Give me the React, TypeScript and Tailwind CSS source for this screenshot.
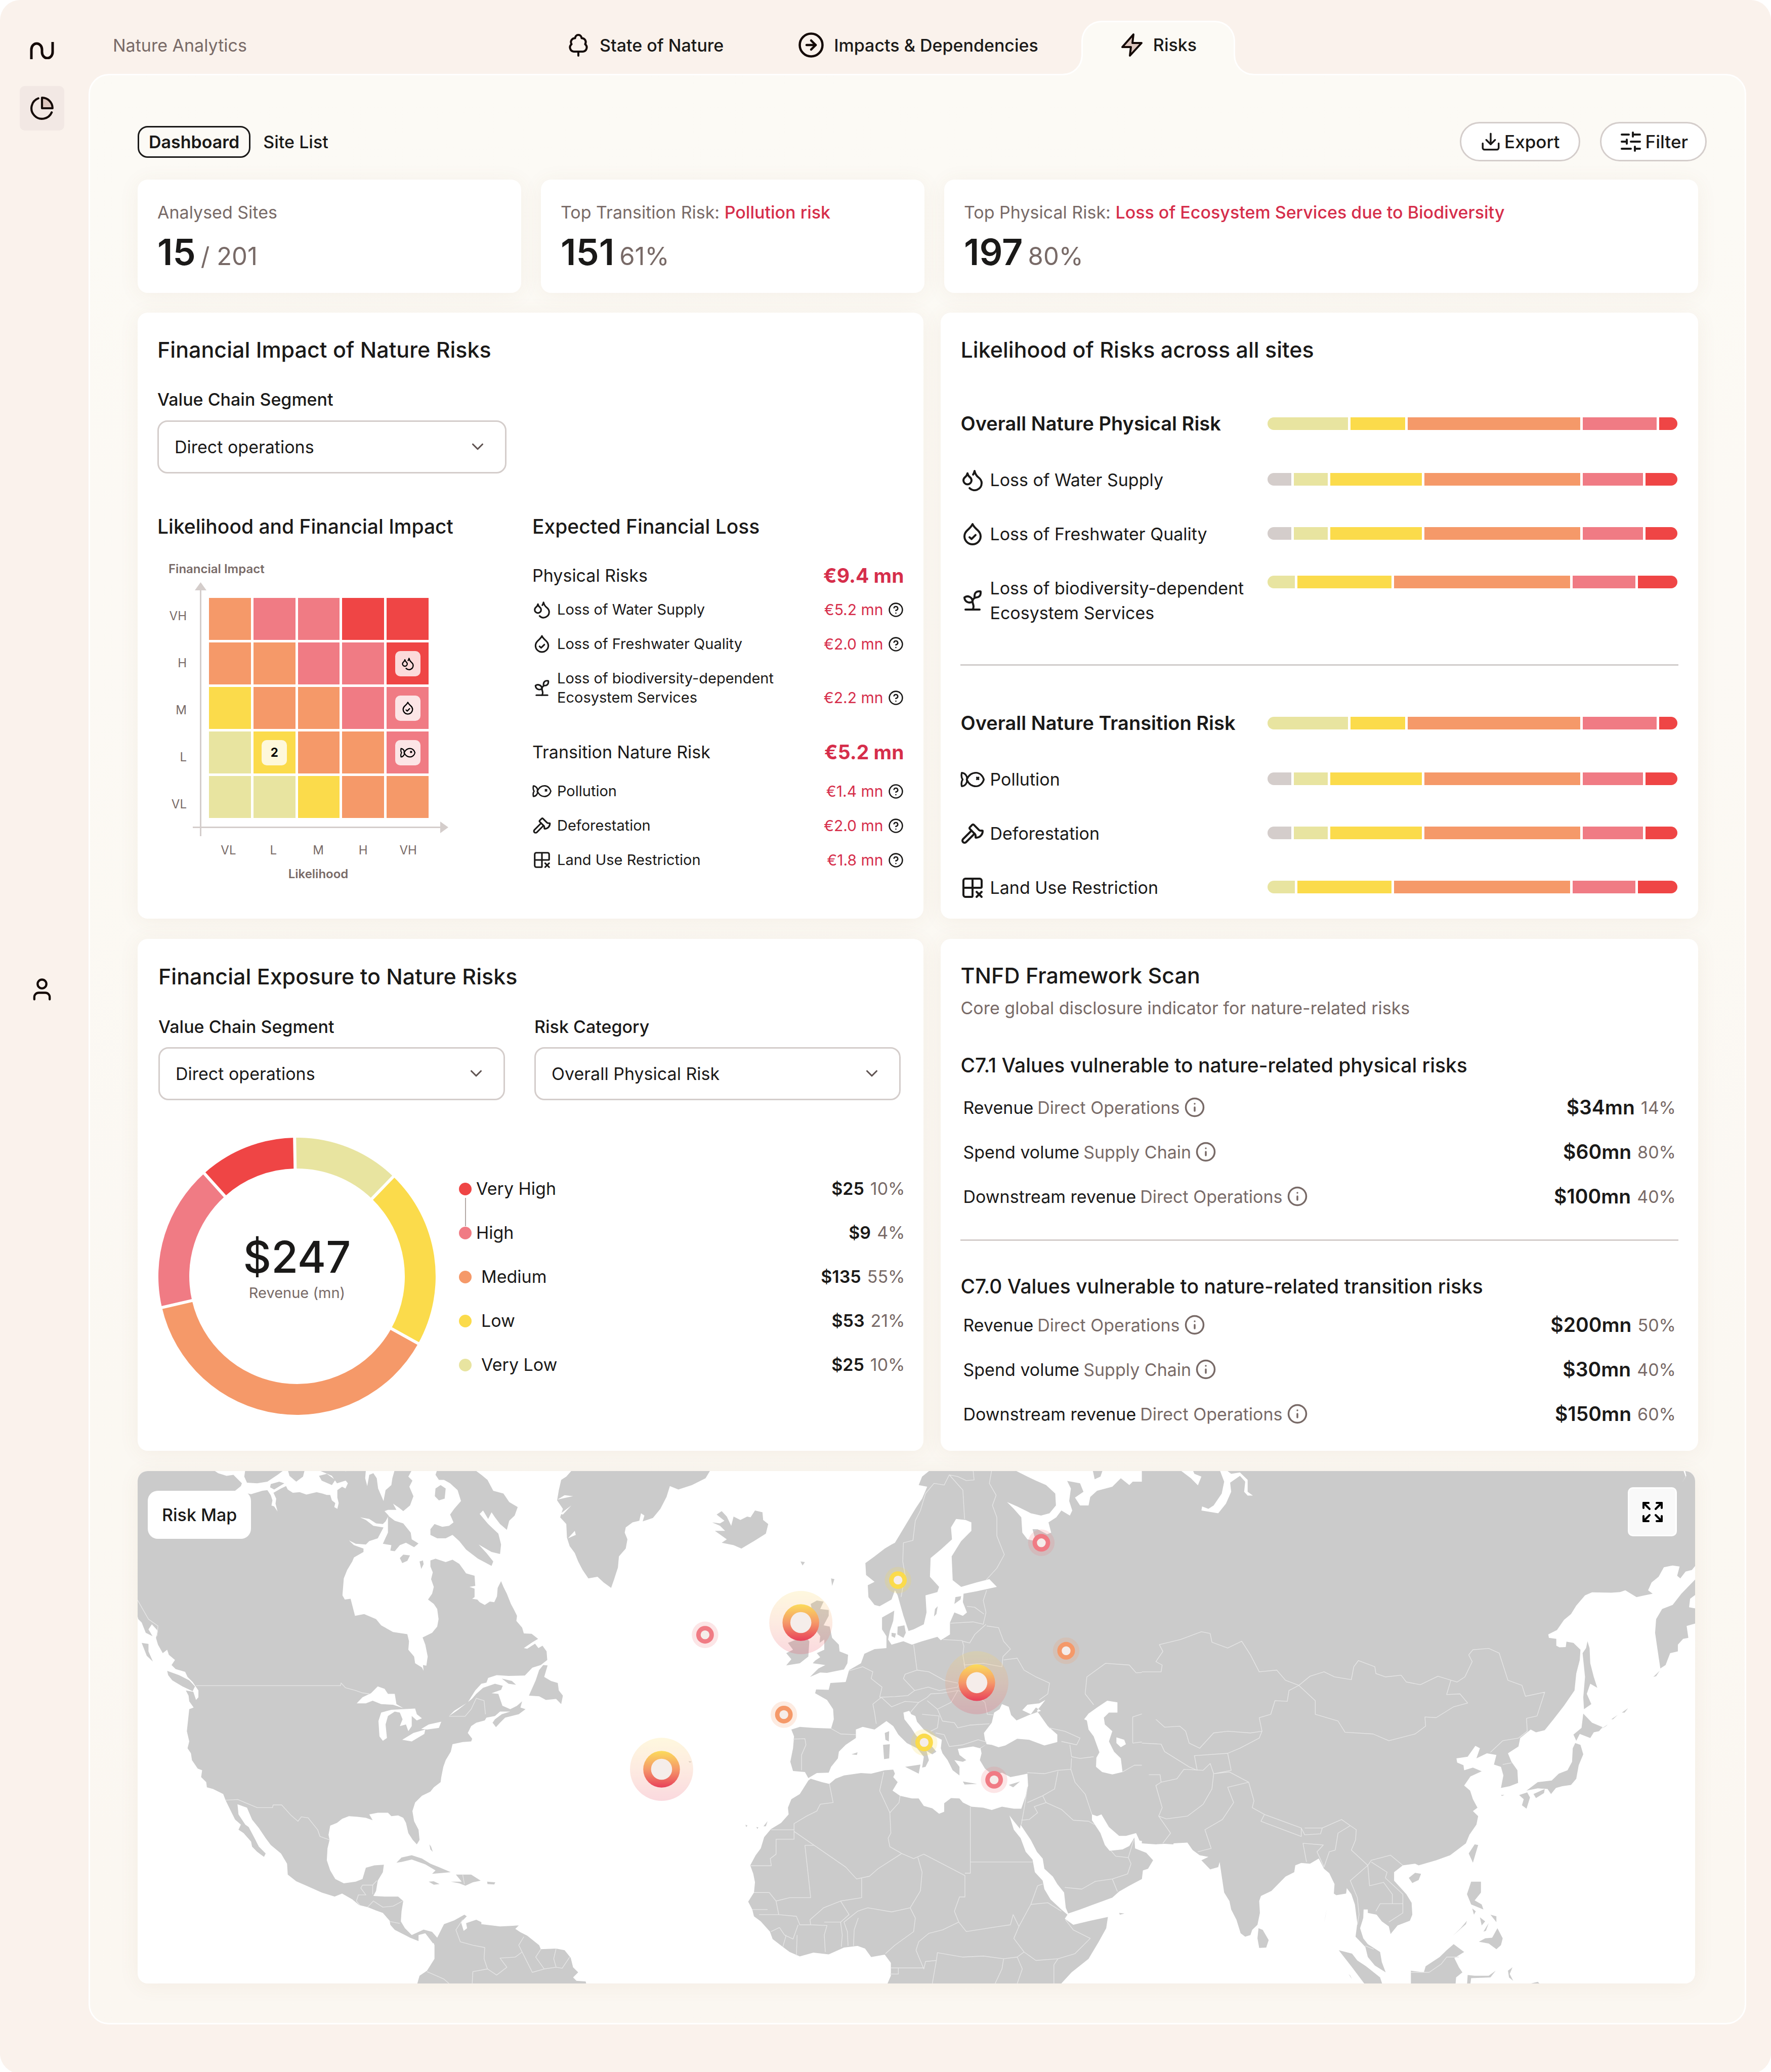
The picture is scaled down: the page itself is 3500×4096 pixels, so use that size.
import { useState } from "react";
import type { ReactNode } from "react";
import {
  Axe,
  ChevronDown,
  CircleArrowRight,
  CircleQuestionMark,
  Droplets,
  Expand,
  Grid2x2X,
  Info,
  SlidersHorizontal,
  Sprout,
  User,
} from "lucide-react";

type IconProps = { className?: string };

const LogoIcon = ({ className }: IconProps) => (
  <svg viewBox="0 0 48 34" fill="none" stroke="currentColor" strokeWidth={5} className={className}>
    <path d="M2.500 34V15a10.500 12 0 0 1 21 0V20a10.500 12 0 0 0 21 0V0" />
  </svg>
);

const PieIcon = ({ className }: IconProps) => (
  <svg viewBox="0 0 24 24" fill="none" stroke="currentColor" strokeWidth={2} strokeLinecap="round" strokeLinejoin="round" className={className}>
    <path d="M21.200 15.900A10 10 0 1 1 8.500 2.600" />
    <path d="M22 12A10 10 0 0 0 12 2v10z" fill="#dcc5bd" />
  </svg>
);

const TreeIcon = ({ className }: IconProps) => (
  <svg viewBox="0 0 24 24" fill="none" stroke="currentColor" strokeWidth={2} strokeLinecap="round" strokeLinejoin="round" className={className}>
    <path d="M7.500 18.500A4.100 4.100 0 0 1 5.300 11.200A3.900 3.900 0 0 1 8.800 5.200a3.200 3.200 0 0 1 6.400 0a3.900 3.900 0 0 1 3.500 6a4.100 4.100 0 0 1-2.200 7.300z" />
    <path d="M12 18.500v4" />
  </svg>
);

const BoltIcon = ({ className }: IconProps) => (
  <svg viewBox="0 0 24 24" fill="#dcc5bd" stroke="currentColor" strokeWidth={2} strokeLinecap="round" strokeLinejoin="round" className={className}>
    <path d="M13.500 1.500 2.500 14H11l-1 8.500L21.500 10H12.500z" />
  </svg>
);

const ExportIcon = ({ className }: IconProps) => (
  <svg viewBox="0 0 24 24" fill="none" stroke="currentColor" strokeWidth={2} strokeLinecap="round" strokeLinejoin="round" className={className}>
    <path d="M12 3v12" />
    <path d="m7 10 5 5 5-5" />
    <path d="M3 14v5a2 2 0 0 0 2 2h14a2 2 0 0 0 2-2v-5" />
  </svg>
);

const DropletCheckIcon = ({ className }: IconProps) => (
  <svg viewBox="0 0 24 24" fill="none" stroke="currentColor" strokeWidth={2} strokeLinecap="round" strokeLinejoin="round" className={className}>
    <path d="M12 22a8 8 0 0 0 8-8c0-2.500-1.200-4.300-3-6s-4-3.500-5-6c-1 2.500-3.200 4.300-5 6s-3 3.500-3 6a8 8 0 0 0 8 8z" />
    <path d="m9 15 2 1.800 4-4" />
  </svg>
);

const FishIcon = ({ className }: IconProps) => (
  <svg viewBox="0 0 28 24" fill="none" stroke="currentColor" strokeWidth={2} strokeLinecap="round" strokeLinejoin="round" className={className}>
    <path d="M7.300 12C9.500 7 13.500 4.200 18 4.200C22.500 4.200 26 8 27 12C26 16 22.500 19.800 18 19.800C13.500 19.800 9.500 17 7.300 12z" />
    <path d="M1.600 4.300C5.500 4.500 8.500 8.500 7.300 12C8.500 15.500 5.500 19.500 1.600 19.700C1 17 1.200 14 2.600 12C1.200 10 1 7 1.600 4.300z" />
    <path d="m19 9.700 1.900 1.900m0-1.900L19 11.600" />
  </svg>
);

type Segment = { width: number; tone: string };

const seg = (gray: number, veryLow: number, low: number, medium: number, high: number, veryHigh: number): Segment[] =>
  [
    { width: gray, tone: "bg-[#d4cdcb]" },
    { width: veryLow, tone: "bg-[#e8e4a0]" },
    { width: low, tone: "bg-[#fbdb4b]" },
    { width: medium, tone: "bg-[#f59969]" },
    { width: high, tone: "bg-[#f07b84]" },
    { width: veryHigh, tone: "bg-[#ef4545]" },
  ].filter((s) => s.width > 0);

const overallBar = seg(0, 164, 111, 352, 151, 37);
const wideBar = seg(48, 70, 186, 317, 123, 65);
const narrowBar = seg(0, 56, 191, 358, 128, 80);

const RiskBar = ({ segments }: { segments: Segment[] }) => (
  <div className="mr-[2px] flex h-[25px] w-[810px] shrink-0 gap-[5px] overflow-hidden rounded-full">
    {segments.map((s) => (
      <div key={s.tone} className={s.tone} style={{ flexGrow: s.width, flexBasis: 0 }} />
    ))}
  </div>
);

const Card = ({ children, className = "" }: { children: ReactNode; className?: string }) => (
  <section className={`rounded-[20px] bg-white shadow-[0_4px_40px_rgba(140,100,60,0.07)] ${className}`}>{children}</section>
);

const Select = ({ id, options }: { id: string; options: string[] }) => (
  <div className="relative">
    <select
      id={id}
      className="h-[105px] w-full appearance-none rounded-[20px] border-3 border-[#d4cdcb] bg-white pl-[31px] pr-[80px] text-[34px] text-[#1a1918]"
    >
      {options.map((o) => (
        <option key={o}>{o}</option>
      ))}
    </select>
    <ChevronDown className="pointer-events-none absolute right-[38px] top-[33px] size-[38px] text-[#5f5351]" />
  </div>
);

const O = "bg-[#f59969]";
const P = "bg-[#f07b84]";
const R = "bg-[#ef4545]";
const Y = "bg-[#fbdb4b]";
const G = "bg-[#e8e4a0]";

const matrix = [
  { label: "VH", cells: [O, P, P, R, R] },
  { label: "H", cells: [O, O, P, P, R] },
  { label: "M", cells: [Y, O, O, P, P] },
  { label: "L", cells: [G, Y, O, O, P] },
  { label: "VL", cells: [G, G, Y, O, O] },
];

const badges: Record<string, ReactNode> = {
  "H-4": <Droplets className="size-[28px]" />,
  "M-4": <DropletCheckIcon className="size-[28px]" />,
  "L-1": "2",
  "L-4": <FishIcon className="h-[26px] w-[32px]" />,
};

const Matrix = () => (
  <div className="mt-[44px] pl-[22px] text-[24px] leading-[30px] text-[#786a67]">
    <p className="font-semibold">Financial Impact</p>
    <div className="mt-[11px] flex">
      <div className="flex w-[36px] flex-col pt-[20px] text-right">
        {matrix.map((row) => (
          <span key={row.label} className="flex h-[93px] items-center justify-end">
            {row.label}
          </span>
        ))}
      </div>
      <div className="relative ml-[28px] h-[485px] w-[475px]">
        <svg viewBox="0 0 505 505" className="absolute -left-[16px] top-0 size-[505px]" fill="#d4cdcb" aria-hidden="true">
          <rect x="14" y="12" width="3" height="490" />
          <rect x="0" y="483" width="490" height="3" />
          <path d="M15.500 0 27 16H4z" />
          <path d="M505 484.500 489 473v23z" />
        </svg>
        <div className="relative ml-[16px] grid w-[434px] grid-cols-5 gap-[5px] pt-[31px]">
          {matrix.map((row) =>
            row.cells.map((tone, i) => (
              <div key={`${row.label}-${i}`} className={`flex h-[83px] items-center justify-center ${tone}`}>
                {badges[`${row.label}-${i}`] && (
                  <span className="flex size-[50px] items-center justify-center rounded-[10px] bg-white/80 font-bold text-black">
                    {badges[`${row.label}-${i}`]}
                  </span>
                )}
              </div>
            ))
          )}
        </div>
      </div>
    </div>
    <div className="mt-[30px] ml-[74px] grid w-[444px] grid-cols-5 text-center">
      {["VL", "L", "M", "H", "VH"].map((l) => (
        <span key={l}>{l}</span>
      ))}
    </div>
    <p className="mt-[17px] ml-[74px] w-[444px] text-center font-semibold">Likelihood</p>
  </div>
);

type Loss = { icon: ReactNode; label: string; value: string; tall?: boolean };

const physicalLoss: Loss[] = [
  { icon: <Droplets className="size-[38px]" />, label: "Loss of Water Supply", value: "€5.2 mn" },
  { icon: <DropletCheckIcon className="size-[38px]" />, label: "Loss of Freshwater Quality", value: "€2.0 mn" },
  { icon: <Sprout className="size-[38px]" />, label: "Loss of biodiversity-dependent Ecosystem Services", value: "€2.2 mn", tall: true },
];

const transitionLoss: Loss[] = [
  { icon: <FishIcon className="h-[34px] w-[40px]" />, label: "Pollution", value: "€1.4 mn" },
  { icon: <Axe className="size-[38px]" />, label: "Deforestation", value: "€2.0 mn" },
  { icon: <Grid2x2X className="size-[38px]" />, label: "Land Use Restriction", value: "€1.8 mn" },
];

const LossRow = ({ icon, label, value, tall }: Loss) => (
  <li className={`flex ${tall ? "items-end" : "items-center"}`}>
    <span className="flex w-[38px] shrink-0 justify-center self-center">{icon}</span>
    <span className="ml-[11px] w-[460px] text-[29px] leading-[38px] text-[#1a1918]">{label}</span>
    <span className="ml-auto text-[30px] leading-[38px] text-[#d62e4b]">{value}</span>
    <button type="button" aria-label={`About ${label}`} className="ml-[10px] self-end pb-[3px]">
      <CircleQuestionMark className="size-[31px] text-[#1a1918]" />
    </button>
  </li>
);

const LossGroup = ({ title, total, children }: { title: string; total: string; children: ReactNode }) => (
  <div>
    <div className="flex items-center justify-between">
      <h4 className="text-[34px] leading-[44px]">{title}</h4>
      <span className="text-[39px] leading-[44px] font-bold text-[#d62e4b]">{total}</span>
    </div>
    {children}
  </div>
);

type LikelihoodRow = { icon: ReactNode; label: string; bar: Segment[]; tall?: boolean };

const physicalBars: LikelihoodRow[] = [
  { icon: <Droplets className="size-[48px]" />, label: "Loss of Water Supply", bar: wideBar },
  { icon: <DropletCheckIcon className="size-[48px]" />, label: "Loss of Freshwater Quality", bar: wideBar },
  { icon: <Sprout className="size-[48px]" />, label: "Loss of biodiversity-dependent Ecosystem Services", bar: narrowBar, tall: true },
];

const transitionBars: LikelihoodRow[] = [
  { icon: <FishIcon className="h-[46px] w-[54px]" />, label: "Pollution", bar: wideBar },
  { icon: <Axe className="size-[48px]" />, label: "Deforestation", bar: wideBar },
  { icon: <Grid2x2X className="size-[48px]" />, label: "Land Use Restriction", bar: narrowBar },
];

const LikelihoodGroup = ({ title, rows }: { title: string; rows: LikelihoodRow[] }) => (
  <div>
    <div className="flex items-center justify-between">
      <h3 className="text-[38px] leading-[50px] font-semibold">{title}</h3>
      <RiskBar segments={overallBar} />
    </div>
    <ul className="mt-[62px] flex flex-col gap-[58px]">
      {rows.map((r) => (
        <li key={r.label} className="flex items-start justify-between">
          <span className="flex items-center">
            <span className="flex w-[48px] justify-center">{r.icon}</span>
            <span className="ml-[10px] w-[530px] text-[34px] leading-[49px]">{r.label}</span>
          </span>
          <span className={r.tall ? "" : "pt-[11px]"}>
            <RiskBar segments={r.bar} />
          </span>
        </li>
      ))}
    </ul>
  </div>
);

// Donut arcs, in degrees clockwise from the top.
const arcs = [
  { from: -1, to: 44, color: "#e8e4a0" },
  { from: 44, to: 119, color: "#fbdb4b" },
  { from: 119, to: 257, color: "#f59969" },
  { from: 257, to: 318, color: "#f07b84" },
  { from: 318, to: 359, color: "#ef4545" },
];

const point = (deg: number, r: number) => {
  const a = ((deg - 90) * Math.PI) / 180;
  return `${(274 + r * Math.cos(a)).toFixed(1)} ${(274 + r * Math.sin(a)).toFixed(1)}`;
};

const Donut = () => (
  <div className="relative size-[548px] shrink-0">
    <svg viewBox="0 0 548 548" className="size-full" aria-hidden="true">
      {arcs.map((a) => {
        const large = a.to - a.from > 180 ? 1 : 0;
        return (
          <path
            key={a.color}
            d={`M${point(a.from, 274)}A274 274 0 ${large} 1 ${point(a.to, 274)}L${point(a.to, 213)}A213 213 0 ${large} 0 ${point(a.from, 213)}Z`}
            fill={a.color}
          />
        );
      })}
      {arcs.map((a) => (
        <path key={a.from} d={`M${point(a.from, 208)}L${point(a.from, 279)}`} stroke="#fff" strokeWidth={6} />
      ))}
    </svg>
    <div className="absolute inset-0 flex flex-col items-center justify-center pb-[40px]">
      <span className="text-[86px] leading-[106px] font-medium">$247</span>
      <span className="text-[29px] leading-[36px] text-[#786a67]">Revenue (mn)</span>
    </div>
  </div>
);

const exposure = [
  { label: "Very High", value: "$25", share: "10%", tone: "bg-[#ef4545]", near: true },
  { label: "High", value: "$9", share: "4%", tone: "bg-[#f07b84]", near: true },
  { label: "Medium", value: "$135", share: "55%", tone: "bg-[#f59969]", near: false },
  { label: "Low", value: "$53", share: "21%", tone: "bg-[#fbdb4b]", near: false },
  { label: "Very Low", value: "$25", share: "10%", tone: "bg-[#e8e4a0]", near: false },
];

const tnfd = [
  {
    title: "C7.1 Values vulnerable to nature-related physical risks",
    rows: [
      { name: "Revenue", scope: "Direct Operations", value: "$34mn", share: "14%" },
      { name: "Spend volume", scope: "Supply Chain", value: "$60mn", share: "80%" },
      { name: "Downstream revenue", scope: "Direct Operations", value: "$100mn", share: "40%" },
    ],
  },
  {
    title: "C7.0 Values vulnerable to nature-related transition risks",
    rows: [
      { name: "Revenue", scope: "Direct Operations", value: "$200mn", share: "50%" },
      { name: "Spend volume", scope: "Supply Chain", value: "$30mn", share: "40%" },
      { name: "Downstream revenue", scope: "Direct Operations", value: "$150mn", share: "60%" },
    ],
  },
];

const pins = [
  { x: 241, y: 516, color: "#f07b84" },
  { x: 473, y: 751, color: "#f59969" },
  { x: 809, y: 355, color: "#fbdb4b" },
  { x: 886, y: 833, color: "#fbdb4b" },
  { x: 1092, y: 943, color: "#f07b84" },
  { x: 1231, y: 245, color: "#f07b84" },
  { x: 1304, y: 563, color: "#f59969" },
];

const clusters = [
  { x: 113, y: 912 },
  { x: 523, y: 480 },
  { x: 1041, y: 657 },
];

const WorldMap = () => (
  <svg viewBox="0 0 3801 1251" className="block w-full" fill="#cbcbcb" strokeLinejoin="round" role="img" aria-label="World map with risk locations">
    <defs>
      <linearGradient id="cluster" x1="0" y1="0" x2="0" y2="1">
        <stop offset="0" stopColor="#fbdb5b" />
        <stop offset="0.5" stopColor="#f59969" />
        <stop offset="1" stopColor="#e8405a" />
      </linearGradient>
    </defs>

    {/* Americas */}
    <g transform="translate(-15 -28) scale(.829)">
      <path d="M10 30H240L255 40 280 48 300 45 325 70 322 78 305 92 352 102 385 92 400 90 410 105 415 120 412 135 420 138 430 153 424 130 426 115 418 98 440 85 455 78 460 88 475 98 495 96 515 103 545 96 562 100 575 104 585 104 590 120 600 128 597 140 606 145 610 128 606 112 606 90 620 80 630 85 637 70 625 55 633 30H690L688 55 694 78 700 45 712 40 722 55 726 85 742 122 748 90 765 75 768 55 775 30H826L815 50 827 62 818 80 830 108 820 135 800 152 788 142 770 130 780 148 755 148 745 152 757 165 748 182 740 190 720 188 700 175 673 170 690 178 712 195 742 200 725 232 700 240 690 250 660 248 640 238 655 252 683 262 683 272 655 288 650 300 635 325 625 350 621 400 628 412 645 410 658 460 685 455 720 470 735 488 770 508 812 514 817 535 815 560 832 580 835 600 855 612 860 622 858 605 868 607 872 580 865 545 857 524 885 510 900 492 904 470 900 440 890 425 873 412 885 395 890 375 882 352 887 332 880 315 880 297 895 292 925 302 945 295 965 307 978 325 985 335 1010 342 1012 372 995 375 1010 380 1010 405 1003 410 1018 412 1025 420 1040 428 1055 418 1068 420 1076 403 1078 378 1088 358 1095 375 1105 395 1117 425 1125 440 1135 460 1133 475 1150 495 1155 512 1178 513 1197 528 1180 538 1155 555 1165 557 1188 542 1198 555 1210 548 1222 565 1224 590 1205 605 1180 613 1158 636 1110 637 1075 635 1050 643 1045 657 1030 660 1012 680 990 715 950 740 935 755 960 738 1002 705 1015 690 1035 672 1070 660 1093 666 1088 678 1060 688 1080 690 1085 705 1092 725 1115 735 1135 725 1150 712 1145 730 1160 735 1140 750 1100 760 1085 775 1073 788 1063 775 1070 765 1090 750 1115 742 1085 742 1070 755 1045 760 1040 768 1015 775 1000 785 990 805 1003 822 1000 830 975 832 945 838 940 860 925 885 918 905 912 935 910 950 890 965 880 978 855 990 835 1010 827 1035 832 1065 845 1090 848 1120 840 1133 828 1120 815 1100 808 1070 800 1055 785 1048 765 1050 755 1040 725 1040 700 1045 710 1062 690 1055 665 1052 640 1050 620 1058 605 1070 585 1078 580 1105 583 1120 577 1145 575 1180 585 1210 600 1235 625 1248 660 1243 680 1235 690 1202 715 1195 743 1193 740 1215 725 1240 720 1270 712 1285 745 1287 785 1287 800 1300 795 1330 793 1360 805 1380 825 1400 860 1384 885 1391 900 1408 888 1425 865 1395 845 1400 845 1418 820 1408 805 1400 775 1385 762 1370 760 1358 740 1335 720 1328 695 1318 670 1312 650 1295 620 1278 598 1287 560 1275 515 1255 485 1242 460 1222 458 1190 440 1160 410 1135 395 1115 375 1085 355 1060 340 1025 312 1015 315 1045 335 1075 345 1082 365 1120 375 1140 395 1160 390 1170 370 1155 355 1140 352 1125 330 1100 315 1090 322 1075 305 1060 290 1030 277 1003 270 985 240 970 222 965 220 950 205 935 208 915 195 910 178 885 175 865 165 850 170 830 163 800 170 735 183 730 170 712 168 695 160 680 182 684 190 708 197 700 197 680 180 655 165 640 158 625 130 617 118 605 128 590 110 575 105 560 92 570 78 545 72 525 78 505 60 485 50 500 62 520 42 510 30 480 20 470 10 430Z" />
      <path d="M105 622 140 635 170 650 187 668 180 682 150 668 120 650 108 635ZM30 540 50 543 50 565 63 595 45 578ZM1170 695 1190 650 1200 620 1212 605 1225 606 1215 640 1235 652 1255 658 1258 680 1270 695 1265 720 1250 705 1220 708 1200 697ZM1090 645 1120 652 1132 663 1110 660ZM335 30H450L430 45 400 65 370 70 340 68 332 50ZM460 30H510L505 50 485 65 465 48ZM410 72 435 65 450 70 420 88 408 82ZM552 48 575 42 600 60 590 75 560 62ZM548 30H630L637 60 605 70 590 48ZM900 30H1010L1030 45 1048 60 1065 92 1095 100 1112 125 1137 140 1128 165 1112 180 1105 207 1085 190 1070 170 1060 155 1050 175 1035 150 1025 160 1050 190 1080 218 1088 250 1085 278 1060 272 1022 250 1045 275 1065 300 1060 313 1020 292 985 265 965 240 945 222 925 232 900 232 880 222 880 205 892 190 915 198 935 195 948 185 938 162 950 145 970 122 960 90 938 70 920 60 905 60 895 45ZM895 85 910 75 925 85 922 115 905 120 893 108ZM755 165 775 180 800 188 822 215 825 235 845 247 832 258 808 245 790 252 775 270 762 268 765 252 740 248 755 215ZM790 290 800 280 820 282 812 298 797 305ZM848 300 858 297 860 308 853 322ZM1298 30 1280 50 1265 60 1258 90 1253 120 1270 145 1262 170 1280 190 1282 230 1290 255 1305 275 1315 300 1328 325 1345 350 1372 345 1390 362 1412 378 1420 355 1432 318 1435 285 1455 262 1460 235 1452 215 1455 200 1475 185 1495 180 1500 158 1510 165 1505 182 1535 172 1557 145 1575 110 1585 78 1610 88 1650 75 1690 55 1705 30Z" />
      <path d="M780 1187 795 1172 825 1165 855 1175 880 1190 905 1200 940 1215 885 1220 895 1210 865 1192 825 1178 795 1185ZM940 1243 972 1243 955 1222 1000 1222 1028 1240 1005 1245 983 1255 965 1248ZM875 1243 890 1242 907 1250 890 1252ZM1047 1243 1071 1245 1068 1251 1048 1250ZM877 1133 882 1140 887 1155 880 1148ZM900 1408 920 1368 950 1357 980 1340 987 1345 970 1362 978 1388 988 1380 985 1365 1015 1355 1030 1362 1030 1368 1085 1375 1140 1372 1130 1382 1145 1392 1165 1402 1200 1430 1205 1442 1250 1440 1275 1445 1293 1467 1300 1495 1315 1510 1300 1525 1310 1535 1337 1537 1340 1548H840L848 1520 870 1505 892 1470 892 1430 885 1412Z" />
      <path fill="#fff" d="M663 718 680 700 705 688 725 668 745 675 755 690 775 690 780 720 800 732 770 722 735 720 710 710 690 718ZM727 770 735 745 765 737 800 735 835 733 840 750 855 762 840 768 825 755 825 785 815 800 808 780 790 785 798 765 790 745 775 742 755 755 748 780 752 820 740 828 730 815ZM797 825 830 805 865 795 862 808 825 830ZM853 793 875 780 912 772 905 790 870 795ZM1254 118 1275 105 1300 108 1280 112ZM1262 160 1295 135 1270 162ZM1285 232 1305 210 1308 222Z" />
      <g fill="none" stroke="#e6e6e6" strokeWidth={2}>
        <path d="M10 400 50 470 78 490 75 520M190 666H615L617 658 630 672 660 680 680 687 700 690M935 756H982L1000 735 1015 703 1038 710 1042 750M277 1003 313 1001 370 1025H415L417 1017H442L470 1048 490 1065 500 1052 520 1055 548 1090 555 1110 583 1120M662 1300 668 1282H690L675 1262 680 1253H710L722 1240M662 1300 672 1312M710 1253V1280M695 1318 712 1300 740 1318 770 1315 798 1300M760 1360 790 1366M975 1222 980 1250" />
        <path d="M975 1355 955 1385 968 1420 1005 1430 1040 1437 1038 1470 1048 1500 1005 1508 1003 1543M1048 1500 1075 1518 1105 1495 1085 1468 1130 1465 1150 1450 1140 1430 1155 1405M1150 1450 1165 1480 1180 1510 1215 1500 1190 1465 1205 1442M1215 1500 1250 1495 1243 1470 1250 1440M1250 1495 1268 1498 1290 1465M870 1508 920 1530 935 1543" />
      </g>
    </g>

    {/* Europe and Africa */}
    <g transform="translate(1185 -28) scale(.829)">
      <path d="M1300 30H1620V1133L1568 1130 1520 1122 1510 1100 1480 1108 1460 1108 1430 1082 1408 1045 1395 1050 1380 1045 1380 1062 1405 1100 1418 1135 1432 1152 1470 1148 1490 1138 1505 1113 1507 1145 1540 1158 1560 1180 1545 1205 1530 1210 1527 1235 1490 1255 1460 1272 1440 1290 1380 1312 1345 1325 1310 1337 1303 1320 1298 1275 1278 1250 1265 1228 1240 1205 1235 1175 1218 1155 1200 1120 1175 1083 1170 1075 1168 1087 1150 1065 1137 1048 1150 1090 1170 1115 1185 1155 1205 1178 1212 1215 1235 1240 1240 1265 1258 1295 1290 1325 1308 1340 1300 1352 1325 1370 1375 1358 1427 1347 1422 1380 1400 1420 1370 1470 1320 1510 1285 1548H776L788 1520 788 1482 770 1458 730 1465 712 1440 690 1432 650 1437 605 1457 560 1452 520 1463 490 1450 470 1435 440 1412 432 1390 405 1360 385 1345 380 1325 368 1302 385 1275 388 1245 383 1220 374 1195 390 1165 405 1145 415 1112 435 1088 465 1070 487 1045 485 1025 495 1000 520 985 545 945 552 940 585 950 607 955 625 940 650 930 700 923 730 925 770 915 795 913 800 925 795 935 808 950 793 975 815 990 850 998 870 998 885 1020 910 1027 930 1043 945 1037 945 1012 965 997 990 998 1000 1010 1025 1022 1060 1025 1085 1032 1115 1022 1150 1028 1172 1028 1185 990 1192 960 1190 925 1165 930 1140 935 1115 922 1090 930 1065 910 1050 885 1055 865 1052 850 1070 838 1050 850 1030 845 985 852 990 870 1010 885 1000 890 975 885 990 905 990 930 970 915 955 885 940 865 935 850 938 825 905 808 885 795 865 772 860 755 848 750 842 740 825 745 828 765 848 790 862 812 880 830 905 840 922 860 910 868 893 858 900 885 890 905 880 907 885 875 865 850 835 835 810 810 795 785 775 770 740 795 705 787 685 795 685 820 655 840 635 860 632 880 612 905 605 922 570 923 545 938 535 920 500 917 492 890 500 850 503 815 495 795 520 787 560 790 612 792 620 765 618 735 600 708 565 688 568 677 605 678 610 658 655 655 665 620 700 600 710 572 740 558 775 555 775 520 762 500 762 465 798 445 795 475 785 505 780 530 790 545 825 535 850 545 880 535 925 522 935 532 962 515 962 480 975 450 1000 460 1012 450 1000 420 1002 395 1040 388 1100 375 1078 352 1040 362 995 375 970 355 967 285 995 240 1025 210 1025 185 1008 178 980 175 965 200 968 235 935 265 905 290 903 345 930 375 925 390 890 400 893 450 885 485 855 500 840 505 825 460 808 400 800 385 790 412 755 432 740 428 722 405 720 370 740 360 715 340 713 305 740 285 770 262 790 250 800 245 830 195 860 145 880 115 895 80 870 75 880 50 905 30H1150L1190 50 1215 62 1245 75 1272 100 1274 135 1255 158 1230 165 1200 158 1160 138 1130 125 1150 145 1172 170 1175 215 1190 235 1215 240 1205 205 1220 205 1248 220 1260 215 1252 185 1275 170 1290 150 1315 165 1322 150 1313 122 1318 85 1307 63 1345 70 1355 95 1330 112 1345 135 1370 135 1375 110 1395 92 1440 80 1465 55 1490 75 1500 65 1530 65 1545 55 1560 62 1568 50 1568 30ZM1120 30Z" />
      <path d="M262 185 285 188 298 180 275 162 290 152 305 168 318 195 325 168 345 178 365 168 375 170 388 150 410 155 412 178 427 190 420 218 385 240 348 262 325 252 290 245 305 235 270 210 300 210 285 195ZM555 440 552 425 570 415 590 418 580 440 605 443 605 460 590 488 608 492 615 525 635 545 637 565 662 575 660 600 650 618 600 628 580 627 550 640 575 615 595 605 558 600 565 592 580 582 570 570 592 560 592 530 578 540 580 520 565 500 550 480ZM485 540 510 530 530 515 548 535 545 580 520 600 480 606 495 588 480 570 500 560ZM770 805 783 800 782 830 772 825ZM765 840 785 838 783 880 768 882ZM830 905 875 898 870 925 850 915ZM1000 948 1042 955 1005 957ZM1135 958 1168 948 1148 965ZM808 492 828 488 832 510 825 525 807 515ZM790 510 803 512 800 525 790 520ZM918 440 926 432 922 455 915 462ZM1382 30H1412L1405 50 1388 58ZM672 868 690 862 688 870ZM978 405 995 402 993 412 975 425ZM360 1075 366 1078 362 1082ZM392 1082 398 1083 395 1088ZM413 1080 425 1065 420 1080ZM522 300 535 302 528 312ZM612 350 622 352 615 372ZM192 888 202 890 196 892ZM1460 1335 1476 1337 1462 1340Z" />
      <path fill="#fff" d="M1065 825 1062 805 1085 775 1092 745 1108 735 1115 720 1135 728 1142 752 1158 768 1195 752 1230 740 1215 730 1200 750 1175 738 1190 722 1225 718 1243 708 1218 740 1250 785 1278 810 1278 832 1240 842 1195 825 1160 822 1125 842 1105 847 1085 840 1070 838ZM1357 765 1370 748 1395 730 1425 710 1455 715 1455 745 1430 745 1415 760 1418 780 1440 800 1430 830 1445 860 1465 880 1470 920 1440 927 1410 920 1392 905 1393 878 1402 862 1385 815 1370 795 1365 768ZM1452 818 1475 825 1480 838 1465 847 1452 835Z" />
      <g fill="none" stroke="#e6e6e6" strokeWidth={2}>
        <path d="M875 150 890 100 915 70 945 75 960 45 1000 90 1005 175M960 45 985 50 1010 62 1033 60 1030 30M875 150 860 180 853 238 825 245 823 300 830 340 818 405M1085 30 1078 70 1098 105 1087 135 1100 170 1100 225 1122 280 1100 320 1068 355M1070 385 1060 415 1068 450 1060 485 1030 478 963 482M1012 432 1035 435 1062 455M1070 490 1105 495 1120 535 1140 558 1118 580 1115 610 1060 600 1005 605 1000 575 1003 550 998 533 942 530M1068 485 1035 515 1020 540 1000 535M1120 590 1160 585 1180 620 1215 640 1255 658 1250 690 1225 708M855 545 865 620 830 632 825 645 858 680 898 670 930 680 985 670 995 640 1008 620 1003 600M865 620 900 625 945 650 985 658M755 700 762 670 730 645 735 625 705 610 665 622M755 700 800 698 838 695 858 680M735 720 760 700 790 728 830 712 870 715 895 700 905 690 940 688 985 680M745 778 740 745 735 720M870 715 845 745M895 710 925 735 965 715 985 680 1040 695 1065 715 1072 750 1092 752M880 750 930 755 925 790 905 800M925 735 940 770 975 775 985 790 1020 782 1078 778M920 805 945 810 960 845 1000 840 1045 825 1070 832M612 792 640 808 685 810M500 823 535 822 538 840 525 870 525 915M1253 790 1300 800 1345 820 1335 840 1290 830M1315 840 1320 875 1345 880 1385 875M1190 922 1240 925 1280 915 1318 912 1320 880M1385 722 1360 690 1365 640 1420 600 1490 605 1510 628 1568 625M1500 835V758L1540 745 1600 770M1500 835 1540 830 1600 850M1470 920 1505 900 1540 900 1600 925M1318 912 1330 950 1360 985 1380 1045M1280 918 1270 970 1235 990 1190 1010M1235 990 1245 1010 1290 1030 1325 1062 1370 1065 1388 1075M1172 1062 1195 1060 1220 1040 1210 1022 1245 1010M1190 965 1180 1030 1172 1075M1436 1152 1450 1168 1487 1172 1503 1120M1487 1172 1495 1190 1485 1220 1440 1235 1455 1272M1440 1235 1390 1242 1350 1265 1300 1260" />
        <path d="M607 955 618 1010 580 1015 570 1035 540 1050 503 1072V1090H435M503 1090V1118H450V1162L433 1175 436 1196H374M503 1095 655 1200 687 1235 725 1227 750 1205 820 1160 785 1140 780 1115 788 1100 785 1040 755 975 767 920M820 1160 855 1175 885 1162 1006 1225V1288H990L975 1330 988 1362 940 1385 900 1395 870 1420 862 1445 885 1500 890 1478 922 1475M1022 1022V1218H1006M1022 1185H1205M785 1040 812 1010 815 990M535 1136H562M535 1136 552 1290H490M702 1233V1290L640 1300 590 1320 550 1355 552 1370 600 1372 592 1400 595 1450M867 1170 880 1215 875 1270 845 1320 860 1350 855 1390 800 1430 772 1455M640 1300 665 1340 640 1362H592M640 1362 645 1400 642 1435M662 1432 660 1390 650 1362 690 1330 720 1320 790 1332 845 1320M678 1432 680 1385 692 1350M385 1275 430 1275 450 1300 458 1340 510 1345 520 1370 552 1370M450 1300 490 1290M380 1325 425 1325M458 1340 400 1340M435 1390 460 1378 475 1400 500 1412 515 1370M470 1435 480 1400M510 1460 512 1400M988 1362 1010 1390 1060 1382 1105 1375 1140 1370 1148 1340 1165 1375 1150 1410 1180 1450 1160 1465 1120 1470 1060 1462 1000 1465 925 1452 922 1475 910 1543M1165 1375 1200 1310 1220 1255 1235 1250M1200 1310 1250 1305 1290 1330M1302 1355 1325 1385 1375 1410 1330 1455 1280 1470 1215 1475 1180 1450M1280 1470 1268 1488V1543M1160 1465 1175 1500 1160 1543M1120 1470 1115 1500 1095 1543M788 1497H885M810 1497V1515H785" />
      </g>
    </g>

    {/* Asia */}
    <g transform="translate(2485 -28) scale(.855 .829)">
      <path d="M-40 30H1550V300L1530 325 1512 330 1497 350 1488 342 1495 315 1475 312 1450 317 1435 345 1415 362 1405 385 1418 395 1395 400 1372 405 1340 385 1325 390 1300 392 1245 391 1225 400 1200 430 1185 455 1165 472 1145 502 1120 515 1122 525 1143 528 1143 548 1152 553 1170 552 1172 536 1192 540 1212 560 1210 590 1200 630 1195 680 1165 725 1135 765 1110 797 1085 803 1070 795 1040 820 1035 845 1005 865 1015 890 1032 915 1034 952 1010 962 985 967 992 930 985 905 965 898 972 870 945 865 915 880 925 850 912 843 890 875 858 880 860 892 878 900 880 915 905 907 930 918 898 933 880 960 897 975 905 1000 918 1025 905 1035 920 1050 915 1075 895 1105 885 1130 840 1165 800 1180 750 1195 740 1190 705 1195 680 1215 680 1240 715 1280 730 1305 732 1340 725 1358 690 1372 670 1397 665 1375 645 1360 630 1340 605 1335 605 1325 593 1325 592 1350 583 1380 592 1410 605 1427 640 1450 645 1480 656 1510 625 1490 605 1465 598 1435 570 1405 575 1365 568 1310 558 1280 545 1262 543 1278 515 1283 508 1278 510 1250 495 1218 480 1205 465 1175 440 1190 415 1188 398 1195 395 1215 370 1228 330 1270 300 1285 295 1300 297 1335 290 1370 275 1385 270 1400 255 1405 242 1395 230 1355 215 1325 210 1300 195 1275 187 1220 182 1185 178 1200 155 1207 130 1180 150 1170 125 1165 105 1150 90 1128 50 1130 0 1133-40 1130ZM1550 342 1500 395 1475 428 1445 440 1428 470 1425 510 1432 560 1440 615 1455 605 1468 570 1490 565 1490 545 1505 528 1520 525 1515 490 1550 480V440L1522 435 1525 410 1550 390Z" />
      <path d="M1232 535 1238 555 1240 600 1250 640 1260 672 1240 660 1230 690 1243 720 1222 735 1220 700 1225 640 1218 570 1228 555ZM1220 748 1245 775 1275 788 1265 800 1250 803 1240 820 1210 808 1200 828 1192 810 1215 790ZM1197 835 1212 840 1220 868 1207 900 1200 940 1185 958 1160 962 1142 967 1128 985 1118 970 1090 968 1058 975 1090 950 1130 945 1150 925 1175 915 1188 890 1190 850ZM1078 985 1110 970 1108 982 1085 997ZM1037 988 1060 980 1068 995 1058 1028 1045 1018 1050 1000ZM893 1160 910 1133 920 1135 905 1187ZM722 1232 740 1217 757 1220 750 1238 732 1247ZM900 1243 928 1243 928 1275 910 1298 930 1310 935 1325 900 1310 888 1280ZM922 1420 940 1410 960 1408 975 1380 990 1410 985 1430 972 1442 950 1425ZM925 1348 940 1360 930 1372ZM955 1340 972 1345 972 1362ZM935 1390 950 1365 942 1388ZM848 1402 870 1380 888 1358 885 1368ZM903 1322 913 1330 908 1340ZM293 1380 305 1385 322 1415 315 1437 295 1438 290 1410ZM522 1445 560 1455 575 1475 600 1492 640 1525 648 1550H600L560 1495ZM728 1550 728 1505 765 1510 770 1492 810 1465 830 1445 850 1427 880 1450 852 1468 865 1495 875 1510 857 1525 855 1550ZM888 1550 890 1518 910 1520 950 1520 970 1505 955 1525 900 1527 897 1550ZM1005 1505 1018 1495 1010 1515 1020 1535 1008 1525ZM1268 795 1290 780 1285 785ZM1300 765 1318 752 1305 765ZM1330 745 1348 732 1338 745ZM1420 640 1438 622 1428 638ZM985 988 995 987 988 991ZM480 1365 488 1322 484 1345ZM1070 1543 1090 1538 1095 1543ZM550 1515 560 1530 555 1520Z" />
      <path fill="#fff" d="M68 30 100 55 120 76 130 50 110 42 105 30ZM182 30 195 65 188 100 165 135 150 145 132 138 130 150 178 158 200 130 215 95 212 68 240 48 255 65 252 95 262 106 277 106 262 95 262 60 240 38 215 42 200 30ZM1505 30 1512 50 1502 68 1514 48 1510 30Z" />
      <g fill="none" stroke="#e6e6e6" strokeWidth={2}>
        <path d="M-40 625 15 625 18 605 0 595 20 565 10 545 70 530 130 507 155 512 160 538 205 555 245 535 270 575 295 625 345 620 370 650 408 665 440 638 480 625 510 640 558 648 565 610 578 592 625 610 628 630 655 640 700 635 715 655 755 663 805 638 860 655 882 640 903 595 893 575 905 560 950 556 980 570 1005 650 1045 665 1055 697 1110 685 1088 755 1058 762 1060 800 1035 820M408 665 380 680 375 712 340 710 328 750 295 760 303 800 270 805 205 800 165 805 125 850 95 835 85 800 68 785 25 788 0 765M408 665 455 710 455 750 520 770 540 803 620 808 665 828 740 808 770 785 768 758 800 760 850 728 890 717 868 690 830 692 842 650M303 800 295 820 240 850 205 865 110 872 118 915 95 905 25 860 15 838-40 835M205 865 215 915 165 925 155 895 135 915 80 912 60 940 15 950 12 928-20 928M165 925 160 970 135 1015 90 1050 30 1058 8 1050 18 1025 0 960 15 950M8 1050 42 1100 20 1130M165 925 210 920 265 950 205 965 222 1010 190 1060 140 1090 158 1145 120 1155M265 950 280 1005 275 1025 310 1045 415 1085 415 1110 300 1065 310 1045M415 1085 425 1105 470 1102 475 1085 425 1085M475 1085 530 1060 555 1078 520 1100 512 1150 495 1155 480 1200 460 1155 478 1135 420 1130 430 1185M555 1078 572 1090 570 1120 558 1150 605 1195 615 1180 670 1165 705 1195M605 1195 555 1240 575 1290 580 1340 575 1370M605 1195 610 1255 650 1245 675 1280 675 1308 640 1308 628 1330M615 1185 660 1215 655 1232 705 1280 705 1335 665 1362M675 1308H705M955 862 990 828 1035 820M990 898 1015 893M598 1432 622 1442M728 1510 780 1510 815 1485 830 1465H865" />
      </g>
    </g>

    <g transform="translate(1185 -28) scale(.829)">
      {clusters.map((c) => (
        <g key={c.x}>
          <circle cx={c.x} cy={c.y} r={93} fill="url(#cluster)" opacity={0.2} />
          <circle cx={c.x} cy={c.y} r={54} fill="url(#cluster)" />
          <circle cx={c.x} cy={c.y} r={31} fill="#f5edea" />
        </g>
      ))}
      {pins.map((p) => (
        <g key={p.x}>
          <circle cx={p.x} cy={p.y} r={39} fill={p.color} opacity={0.2} />
          <circle cx={p.x} cy={p.y} r={26} fill={p.color} />
          <circle cx={p.x} cy={p.y} r={13} fill="#f5edea" />
        </g>
      ))}
    </g>
  </svg>
);

const tabs = [
  { label: "State of Nature", icon: <TreeIcon className="size-[48px] text-[#140a07]" /> },
  { label: "Impacts & Dependencies", icon: <CircleArrowRight className="size-[54px] text-[#140a07]" /> },
  { label: "Risks", icon: <BoltIcon className="size-[48px] text-[#140a07]" /> },
];

export default function App() {
  const [tab, setTab] = useState("Risks");
  const [view, setView] = useState("Dashboard");

  return (
    <div className="flex min-h-screen rounded-[40px] bg-[#faf2ec] pb-[97px] font-['Inter','Noto_Sans',sans-serif] text-[#1a1918]">
      {/* Sidebar */}
      <aside className="flex w-[175px] shrink-0 flex-col items-center pr-[9px] pt-[83px]">
        <LogoIcon className="h-[34px] w-[49px] text-[#140a07]" />
        <button type="button" aria-label="Analytics" className="mt-[53px] flex size-[88px] items-center justify-center rounded-[10px] bg-[#f2e8e4]">
          <PieIcon className="size-[50px] text-[#140a07]" />
        </button>
        <button type="button" aria-label="Account" className="mt-[1672px]">
          <User className="size-[52px] text-[#140a07]" />
        </button>
      </aside>

      <div className="flex min-w-0 flex-1 flex-col pr-[49px]">
        <header className="flex h-[146px] items-end">
          <div className="flex h-[105px] w-[871px] items-center pb-[9px] pl-[48px] text-[34px] text-[#786a67]">Nature Analytics</div>
          <nav className="flex">
            {tabs.map((t) => {
              const active = t.label === tab;
              return (
                <button
                  key={t.label}
                  type="button"
                  onClick={() => setTab(t.label)}
                  className={`relative flex items-center gap-[18px] whitespace-nowrap px-[73px] text-[34px] font-medium ${
                    active ? "z-10 -mb-[3px] ml-[12px] h-[108px] rounded-t-[40px] border-3 border-b-0 border-white bg-[#fcfaf5] pb-[16px]" : "h-[105px] pb-[9px]"
                  }`}
                >
                  {t.icon}
                  {t.label}
                  {active && (
                    <>
                      <svg viewBox="0 0 40 40" className="absolute -left-[40px] bottom-0 size-[40px]" aria-hidden="true">
                        <path d="M40 0v40H0v-3a37 37 0 0 0 37-37z" fill="#fcfaf5" />
                        <path d="M0 38.500A38.500 38.500 0 0 0 38.500 0" fill="none" stroke="#fff" strokeWidth={3} />
                      </svg>
                      <svg viewBox="0 0 40 40" className="absolute -right-[40px] bottom-0 size-[40px]" aria-hidden="true">
                        <path d="M0 0v40h40v-3A37 37 0 0 1 3 0z" fill="#fcfaf5" />
                        <path d="M40 38.500A38.500 38.500 0 0 1 1.500 0" fill="none" stroke="#fff" strokeWidth={3} />
                      </svg>
                    </>
                  )}
                </button>
              );
            })}
          </nav>
        </header>

        <main className="flex-1 rounded-[40px] border-3 border-white bg-[#fcfaf5] bg-linear-to-b from-[#fcfaf5] to-[#fbf7f1] pb-[78px] pl-[94px] pr-[92px] pt-[92px]">
          {/* Toolbar */}
          <div className="flex h-[78px] items-center">
            {["Dashboard", "Site List"].map((v) => (
              <button
                key={v}
                type="button"
                onClick={() => setView(v)}
                className={`h-[63px] rounded-[20px] text-[34px] ${
                  v === view ? "mr-[8px] border-3 border-[#1a1918] px-[19px] font-semibold" : "px-[17px] font-medium"
                }`}
              >
                {v}
              </button>
            ))}
            <div className="-mr-[17px] ml-auto flex gap-[39px]">
              <button type="button" className="flex h-[78px] items-center gap-[6px] rounded-full border-3 border-[#d4cdcb] bg-white px-[37px] text-[35px] font-medium">
                <ExportIcon className="size-[42px]" />
                Export
              </button>
              <button type="button" className="flex h-[78px] items-center gap-[5px] rounded-full border-3 border-[#d4cdcb] bg-white px-[34px] text-[35px] font-medium">
                <SlidersHorizontal className="size-[48px]" />
                Filter
              </button>
            </div>
          </div>

          {/* Summary cards */}
          <div className="mt-[36px] grid grid-cols-[758fr_758fr_1490fr] gap-[39px]">
            {[
              { label: "Analysed Sites", risk: "", value: "15", extra: "/ 201" },
              { label: "Top Transition Risk:", risk: "Pollution risk", value: "151", extra: "61%" },
              { label: "Top Physical Risk:", risk: "Loss of Ecosystem Services due to Biodiversity", value: "197", extra: "80%" },
            ].map((c) => (
              <Card key={c.label} className="h-[224px] px-[39px] pt-[42px]">
                <p className="text-[34px] leading-[46px] text-[#786a67]">
                  {c.label} <span className="font-medium text-[#d62e4b]">{c.risk}</span>
                </p>
                <p className="mt-[10px] flex items-baseline gap-[10px] leading-[90px]">
                  <span className="text-[72px] font-semibold">{c.value}</span>
                  <span className="text-[49px] text-[#786a67]">{c.extra}</span>
                </p>
              </Card>
            ))}
          </div>

          <div className="mt-[39px] grid grid-cols-[1554fr_1497fr] gap-x-[34px] gap-y-[40px]">
            {/* Financial impact */}
            <Card className="h-[1198px] px-[39px] pt-[47px]">
              <h2 className="text-[43px] leading-[52px] font-medium">Financial Impact of Nature Risks</h2>
              <div className="mt-[50px] w-[690px]">
                <label htmlFor="impact-segment" className="mb-[18px] block text-[34px] leading-[46px] font-medium">
                  Value Chain Segment
                </label>
                <Select id="impact-segment" options={["Direct operations"]} />
              </div>
              <div className="mt-[80px] flex">
                <div className="w-[741px]">
                  <h3 className="text-[39px] leading-[50px] font-medium">Likelihood and Financial Impact</h3>
                  <Matrix />
                </div>
                <div className="flex-1">
                  <h3 className="text-[39px] leading-[50px] font-medium">Expected Financial Loss</h3>
                  <div className="mt-[50px] flex flex-col gap-[67px]">
                    <LossGroup title="Physical Risks" total="€9.4 mn">
                      <ul className="mt-[26px] flex flex-col gap-[30px]">
                        {physicalLoss.map((r) => (
                          <LossRow key={r.label} {...r} />
                        ))}
                      </ul>
                    </LossGroup>
                    <LossGroup title="Transition Nature Risk" total="€5.2 mn">
                      <ul className="mt-[36px] flex flex-col gap-[30px]">
                        {transitionLoss.map((r) => (
                          <LossRow key={r.label} {...r} />
                        ))}
                      </ul>
                    </LossGroup>
                  </div>
                </div>
              </div>
            </Card>

            {/* Likelihood */}
            <Card className="px-[39px] pt-[47px]">
              <h2 className="text-[43px] leading-[52px] font-medium">Likelihood of Risks across all sites</h2>
              <div className="mt-[95px]">
                <LikelihoodGroup title="Overall Nature Physical Risk" rows={physicalBars} />
              </div>
              <hr className="mt-[77px] mb-[88px] border-t-3 border-[#d0cccb]" />
              <LikelihoodGroup title="Overall Nature Transition Risk" rows={transitionBars} />
            </Card>

            {/* Exposure */}
            <Card className="h-[1012px] px-[41px] pt-[48px]">
              <h2 className="text-[43px] leading-[52px] font-medium">Financial Exposure to Nature Risks</h2>
              <div className="mt-[51px] flex gap-[58px]">
                <div className="w-[685px]">
                  <label htmlFor="exposure-segment" className="mb-[17px] block text-[34px] leading-[46px] font-medium">
                    Value Chain Segment
                  </label>
                  <Select id="exposure-segment" options={["Direct operations"]} />
                </div>
                <div className="w-[724px]">
                  <label htmlFor="exposure-category" className="mb-[17px] block text-[34px] leading-[46px] font-medium">
                    Risk Category
                  </label>
                  <Select id="exposure-category" options={["Overall Physical Risk", "Overall Transition Risk"]} />
                </div>
              </div>
              <div className="-mr-[4px] mt-[74px] flex">
                <Donut />
                <ul className="ml-[46px] flex flex-1 flex-col gap-[43px] pt-[79px] text-[34px] leading-[44px]">
                  {exposure.map((e, i) => (
                    <li key={e.label} className="relative flex items-center">
                      <span className={`size-[25px] rounded-full ${e.tone}`} />
                      {i === 0 && <span className="absolute left-[12px] top-[40px] h-[56px] w-[2px] bg-[#b5aaa7]" />}
                      <span className={e.near ? "ml-[9px]" : "ml-[19px]"}>{e.label}</span>
                      <span className="ml-auto font-semibold">{e.value}</span>
                      <span className="ml-[12px] text-[#786a67]">{e.share}</span>
                    </li>
                  ))}
                </ul>
              </div>
            </Card>

            {/* TNFD */}
            <Card className="px-[39px] pt-[46px]">
              <h2 className="text-[43px] leading-[52px] font-medium">TNFD Framework Scan</h2>
              <p className="mt-[16px] text-[34px] leading-[46px] text-[#786a67]">Core global disclosure indicator for nature-related risks</p>
              {tnfd.map((group, i) => (
                <div key={group.title} className={i === 0 ? "mt-[65px]" : "mt-[61px] border-t-3 border-[#d4cdcb] pt-[65px]"}>
                  <h3 className="text-[39px] leading-[50px] font-medium">{group.title}</h3>
                  <ul className={`flex flex-col gap-[40px] px-[5px] ${i === 0 ? "mt-[34px]" : "mt-[27px]"}`}>
                    {group.rows.map((r) => (
                      <li key={r.name} className="flex h-[48px] items-center text-[34px]">
                        <span>{r.name}</span>
                        <span className="ml-[8px] text-[#786a67]">{r.scope}</span>
                        <button type="button" aria-label={`About ${r.name}`} className="ml-[8px]">
                          <Info className="size-[42px] text-[#786a67]" />
                        </button>
                        <span className="ml-auto text-[39px] font-semibold">{r.value}</span>
                        <span className="ml-[12px] text-[#786a67]">{r.share}</span>
                      </li>
                    ))}
                  </ul>
                </div>
              ))}
            </Card>
          </div>

          {/* Map */}
          <Card className="relative mt-[40px] mr-[6px] overflow-hidden">
            <WorldMap />
            <h2 className="absolute left-[20px] top-[39px] flex h-[95px] items-center rounded-[20px] bg-white px-[28px] text-[34px] font-medium">Risk Map</h2>
            <button
              type="button"
              aria-label="Expand map"
              className="absolute right-[36px] top-[32px] flex size-[97px] items-center justify-center rounded-[10px] border-3 border-white bg-[#f9f9f9] text-black"
            >
              <Expand className="size-[48px]" />
            </button>
          </Card>
        </main>
      </div>
    </div>
  );
}
